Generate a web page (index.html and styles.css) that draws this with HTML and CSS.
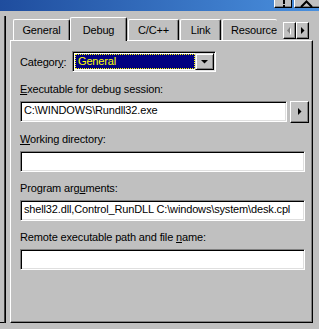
FILE: index.html
```html
<!DOCTYPE html>
<html lang="en">
<head>
  <meta charset="UTF-8" />
  <title>Project Settings - Debug</title>
  <link rel="stylesheet" href="styles.css">
</head>
<body>

  <div class="titlebar">
    <span class="cbtn help">
      <svg width="17" height="8" viewBox="0 0 17 8"><rect x="8" y="0" width="2" height="4" fill="#000"/><rect x="8" y="5" width="2" height="2" fill="#000"/></svg>
    </span>
    <span class="cbtn close">
      <svg width="24" height="8" viewBox="0 0 24 8"><path d="M6 7 L11.5 1.5 L17 7" stroke="#000" stroke-width="2" fill="none"/></svg>
    </span>
  </div>

  <div class="main">
    <div class="side"></div>

    <div class="tabctl">
      <div class="tabstrip">
        <div class="tab t-general">General</div>
        <div class="tab t-debug active">Debug</div>
        <div class="tab t-cpp">C/C++</div>
        <div class="tab t-link">Link</div>
        <div class="tab t-res"><span>Resources</span></div>
        <div class="scroller">
          <span class="sbtn">
            <svg width="11" height="15" viewBox="0 0 11 15"><path d="M7 5 L7 12 L4 8.5 Z" fill="#fff"/><path d="M6 4 L6 11 L3 7.5 Z" fill="#808080"/></svg>
          </span>
          <span class="sbtn">
            <svg width="11" height="15" viewBox="0 0 11 15"><path d="M4 4 L4 11 L7.5 7.5 Z" fill="#000"/></svg>
          </span>
        </div>
      </div>

      <div class="panel">
        <div class="cat-row">
          <label class="cat-label">Categor<u>y</u>:</label>
          <div class="combo">
            <div class="combo-value"><span>General</span></div>
            <span class="combo-btn">
              <svg width="15" height="13" viewBox="0 0 15 13"><path d="M4 5 L11 5 L7.5 8.5 Z" fill="#000"/></svg>
            </span>
          </div>
        </div>

        <div class="field">
          <label><u>E</u>xecutable for debug session:</label>
          <div class="field-row">
            <div class="input wide">C:\WINDOWS\Rundll32.exe</div>
            <span class="browse">
              <svg width="15" height="18" viewBox="0 0 15 18"><path d="M6 5 L6 12 L9.5 8.5 Z" fill="#000"/></svg>
            </span>
          </div>
        </div>

        <div class="field">
          <label><u>W</u>orking directory:</label>
          <div class="input"></div>
        </div>

        <div class="field">
          <label>Program arg<u>u</u>ments:</label>
          <div class="input">shell32.dll,Control_RunDLL C:\windows\system\desk.cpl</div>
        </div>

        <div class="field">
          <label>Remote executable path and file <u>n</u>ame:</label>
          <div class="input"></div>
        </div>
      </div>
    </div>
  </div>

</body>
</html>
```

FILE: styles.css
```css
body {
  margin: 0;
  width: 319px;
  height: 329px;
  overflow: hidden;
  background: #c0c0c0;
  font-family: 'Liberation Sans', Arial, sans-serif;
  font-size: 11px;
  letter-spacing: -0.15px;
  color: #000;
}

/* window title bar, only its lower edge is in view */
.titlebar {
  height: 11px;
  background: linear-gradient(to right, #1f4d9e, #4a90de);
  display: flex;
  justify-content: flex-end;
  align-items: flex-start;
  gap: 2px;
}

.cbtn {
  display: block;
  height: 7px;
  background: #c0c0c0;
  border-left: 1px solid #fff;
  border-bottom: 1px solid #000;
  box-shadow: inset 0 -1px #808080;
}

.cbtn svg {
  display: block;
}

.cbtn.help {
  width: 16px;
  border-right: 1px solid #000;
}

.cbtn.close {
  width: 24px;
}

.main {
  display: flex;
  align-items: flex-start;
}

.side {
  width: 4px;
  height: 306px;
  margin-top: 5px;
  border-right: 1px solid #404040;
  border-bottom: 1px solid #000;
  box-shadow: 1px 0 #000;
}

/* tab control */
.tabctl {
  width: 303px;
  margin-left: 5px;
  margin-top: 6px;
}

.tabstrip {
  height: 23px;
  display: flex;
  align-items: flex-end;
  padding-left: 3px;
}

.tab {
  box-sizing: border-box;
  height: 21px;
  padding-top: 4px;
  text-align: center;
  line-height: 13px;
  background: #c0c0c0;
  border-top: 1px solid #fff;
  border-left: 1px solid #fff;
  border-right: 1px solid #000;
  border-top-left-radius: 2px;
  border-top-right-radius: 2px;
  box-shadow: inset -1px 0 #808080;
  position: relative;
}

.tab.active {
  height: 24px;
  margin-bottom: -1px;
  padding-top: 6px;
  z-index: 1;
}

.t-general { width: 57px; }
.t-debug   { width: 57px; }
.t-cpp     { width: 51px; margin-left: 1px; }
.t-link    { width: 41px; margin-left: 1px; }

.t-res {
  width: 55px;
  margin-left: 1px;
  border-right: none;
  box-shadow: none;
  overflow: hidden;
  text-align: left;
  padding-left: 8px;
  white-space: nowrap;
}

.scroller {
  display: flex;
  margin-left: auto;
  margin-right: 4px;
  margin-bottom: 1px;
}

.sbtn {
  display: block;
  width: 11px;
  height: 15px;
  background: #c0c0c0;
  border-top: 1px solid #fff;
  border-left: 1px solid #fff;
  border-right: 1px solid #000;
  border-bottom: 1px solid #000;
  box-shadow: inset -1px -1px #808080;
}

.sbtn svg {
  display: block;
}

.panel {
  box-sizing: border-box;
  height: 283px;
  padding: 10px 7px 0 9px;
  border-top: 1px solid #fff;
  border-left: 1px solid #fff;
  border-right: 1px solid #000;
  border-bottom: 1px solid #000;
  box-shadow: inset -1px -1px #808080;
}

.cat-row {
  display: flex;
  align-items: center;
  height: 21px;
}

.cat-label {
  width: 52px;
}

.combo {
  box-sizing: border-box;
  width: 144px;
  height: 21px;
  display: flex;
  align-items: center;
  padding: 0 1px 0 1px;
  background: #fff;
  border-top: 1px solid #808080;
  border-left: 1px solid #808080;
  border-right: 1px solid #fff;
  border-bottom: 1px solid #fff;
  box-shadow: inset 1px 1px #000, inset -1px -1px #dfdfdf;
}

.combo-value {
  box-sizing: border-box;
  width: 121px;
  height: 15px;
  margin-left: 1px;
  padding-left: 2px;
  line-height: 13px;
  background: #000080;
  color: #ffff00;
  border: 1px dotted #ffff00;
}

.combo-btn {
  display: block;
  box-sizing: border-box;
  width: 19px;
  height: 17px;
  background: #c0c0c0;
  border-top: 1px solid #dfdfdf;
  border-left: 1px solid #dfdfdf;
  border-right: 1px solid #000;
  border-bottom: 1px solid #000;
  box-shadow: inset 1px 1px #fff, inset -1px -1px #808080;
}

.combo-btn svg {
  display: block;
  margin: 1px 0 0 1px;
}

.field {
  margin-top: 11px;
  display: flex;
  flex-direction: column;
}

.field + .field {
  margin-top: 10px;
}

.field label {
  line-height: 13px;
  margin-bottom: 5px;
}

.field-row {
  display: flex;
  align-items: flex-start;
  gap: 3px;
  margin-right: -4px;
}

.input {
  box-sizing: border-box;
  height: 21px;
  padding: 0 3px;
  line-height: 17px;
  white-space: nowrap;
  overflow: hidden;
  background: #fff;
  border-top: 1px solid #808080;
  border-left: 1px solid #808080;
  border-right: 1px solid #fff;
  border-bottom: 1px solid #fff;
  box-shadow: inset 1px 1px #000, inset -1px -1px #dfdfdf;
}

.input.wide {
  width: 267px;
}

.browse {
  display: block;
  box-sizing: border-box;
  width: 19px;
  height: 22px;
  background: #c0c0c0;
  border-top: 1px solid #fff;
  border-left: 1px solid #fff;
  border-right: 1px solid #000;
  border-bottom: 1px solid #000;
  box-shadow: inset -1px -1px #808080;
}

.browse svg {
  display: block;
  margin: 1px 0 0 1px;
}
```
